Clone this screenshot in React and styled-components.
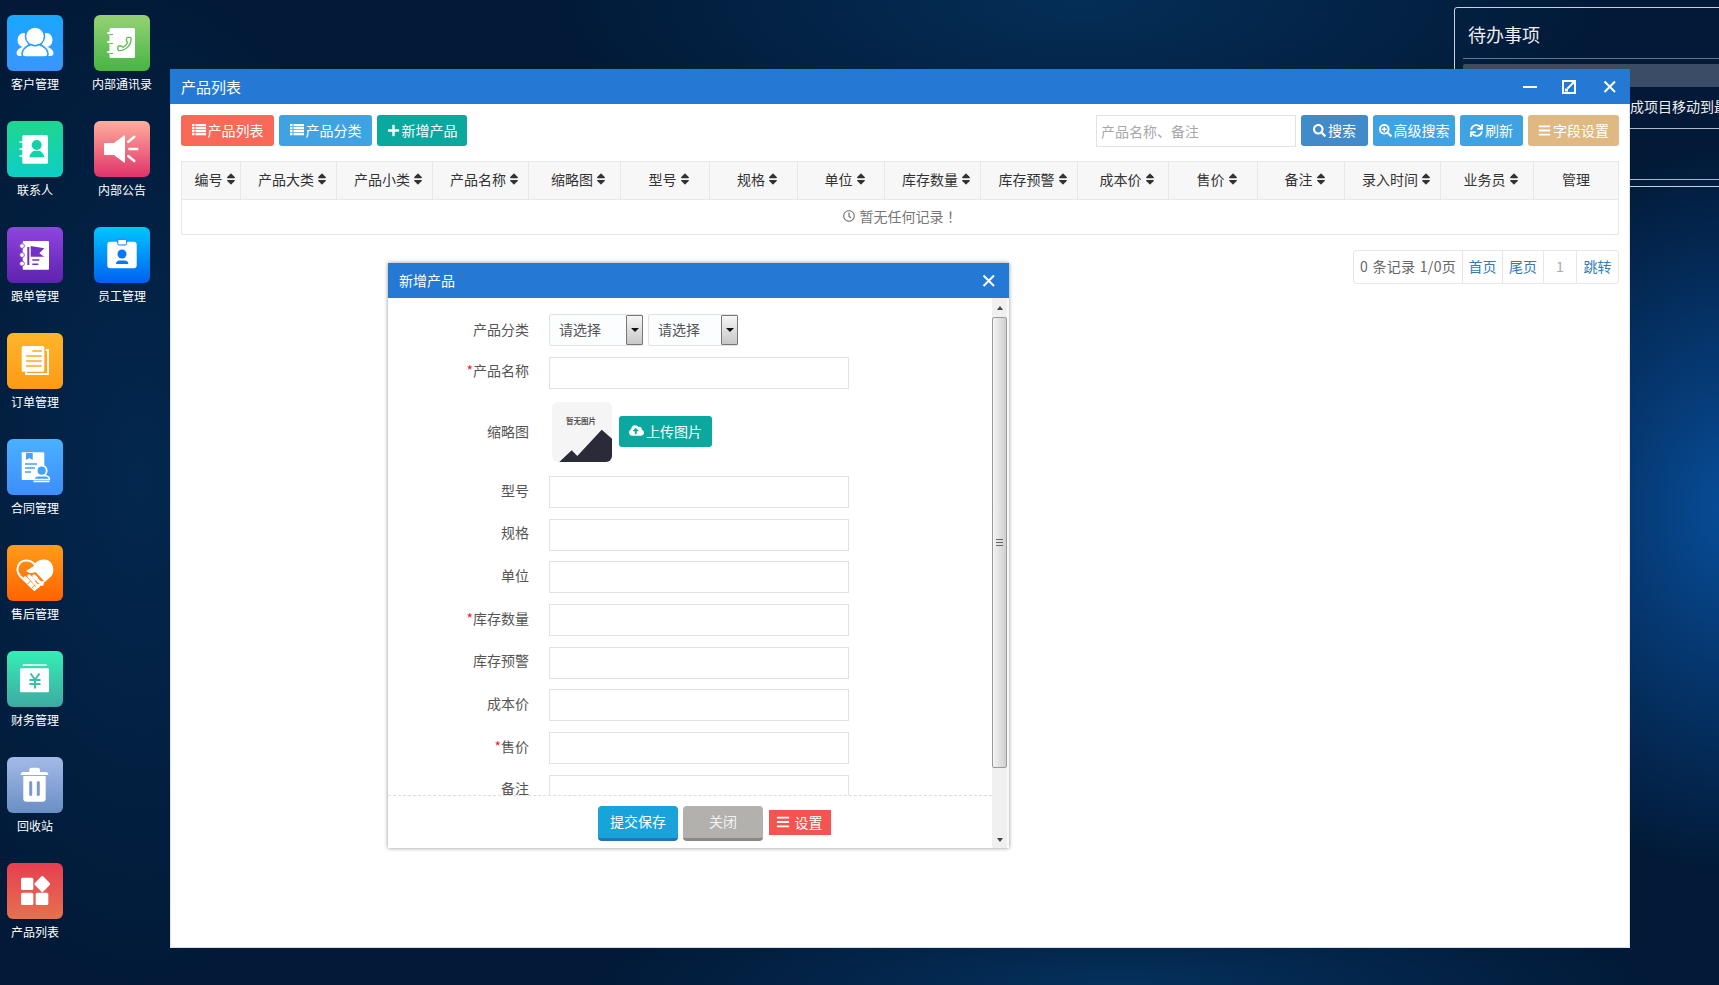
import React from 'react';
import styled, { createGlobalStyle } from 'styled-components';
import { FaPlus, FaSearch, FaSearchPlus, FaSync, FaBars, FaSort, FaRegClock, FaCloudUploadAlt } from 'react-icons/fa';
import { Phone } from 'lucide-react';

const Global = createGlobalStyle`
  html, body { margin: 0; padding: 0; height: 100%; overflow: hidden; }
  body { font-family: "Noto Sans CJK SC", "Liberation Sans", sans-serif; font-size: 14px; color: #333; }
  * { box-sizing: border-box; }
`;

const Desktop = styled.div`
  position: relative;
  width: 1719px;
  height: 985px;
  overflow: hidden;
  background:
    radial-gradient(ellipse 260px 360px at 1730px 510px, rgba(8, 80, 158, 0.95), rgba(8, 80, 158, 0)),
    radial-gradient(ellipse 520px 180px at 1080px 0px, rgba(6, 60, 108, 0.6), rgba(6, 60, 108, 0)),
    radial-gradient(ellipse 520px 90px at 1120px 985px, rgba(5, 58, 108, 0.7), rgba(5, 58, 108, 0)),
    radial-gradient(ellipse 240px 500px at 140px 480px, rgba(4, 50, 96, 0.55), rgba(4, 50, 96, 0)),
    #021a38;
`;

const Shortcuts = styled.div`
  display: grid;
  grid-auto-flow: column;
  grid-template-rows: repeat(9, 106px);
  grid-template-columns: repeat(2, 70px);
  column-gap: 17px;
  padding-top: 15px;
`;

const Shortcut = styled.div`
  display: flex;
  flex-direction: column;
  align-items: center;
`;

const Tile = styled.div`
  width: 56px;
  height: 56px;
  border-radius: 6px;
  background: linear-gradient(180deg, ${p => p.$from}, ${p => p.$to});
  svg { display: block; }
`;

const ShortcutLabel = styled.div`
  margin-top: 4px;
  font-size: 12px;
  line-height: 18px;
  color: #fff;
  white-space: nowrap;
`;

const TodoPanel = styled.div`
  position: absolute;
  left: 1454px;
  top: 7px;
  width: 420px;
  height: 180px;
  border: 1px solid rgba(235, 240, 245, 0.85);
  border-radius: 3px 0 0 0;
  padding-left: 8px;
  color: #eee;
`;

const TodoTitle = styled.div`
  height: 51px;
  padding-left: 5px;
  font-size: 18px;
  line-height: 53px;
  border-bottom: 1px solid rgba(200, 210, 220, 0.5);
`;

const TodoBar = styled.div`
  height: 23px;
  margin-top: 5px;
  background: #3b4c66;
  border-radius: 2px;
`;

const TodoRow = styled.div`
  height: ${p => p.$h}px;
  padding-left: 153px;
  font-size: 14px;
  line-height: 38px;
  white-space: nowrap;
  border-bottom: 1px solid rgba(215, 222, 230, 0.8);
`;

const AppWindow = styled.div`
  position: absolute;
  left: 170px;
  top: 69px;
  width: 1460px;
  height: 879px;
  display: flex;
  flex-direction: column;
`;

const WindowBar = styled.div`
  height: 35px;
  flex: none;
  display: flex;
  align-items: center;
  justify-content: space-between;
  padding: 0 14px 0 11px;
  background: #2379d3;
  color: #fff;
  font-size: 15px;
`;

const WindowControls = styled.div`
  display: flex;
  align-items: center;
  gap: 25px;
  svg { display: block; }
`;

const WindowBody = styled.div`
  position: relative;
  flex: 1;
  background: #fff;
  border-bottom: 1px solid #ddd;
  border-left: 1px solid #e4e4e4;
  border-right: 1px solid #e4e4e4;
  padding: 11px 10px 0 10px;
`;

const Toolbar = styled.div`
  display: flex;
  justify-content: space-between;
  align-items: flex-start;
`;

const ToolGroup = styled.div`
  display: flex;
  gap: 5px;
`;

const ToolButton = styled.div`
  width: ${p => p.$w}px;
  height: 31px;
  padding-bottom: 1px;
  display: flex;
  align-items: center;
  justify-content: center;
  gap: 2px;
  border-radius: 3px;
  background: ${p => p.$bg};
  color: #fff;
  font-size: 14px;
  line-height: 18px;
  white-space: nowrap;
  svg { font-size: 13px; flex: none; }
`;

const SearchBox = styled.div`
  width: 200px;
  height: 32px;
  padding-left: 4px;
  border: 1px solid #e2e2e2;
  color: #a8a8a8;
  font-size: 14px;
  line-height: 30px;
`;

const DataTable = styled.table`
  width: 1437px;
  margin-top: 14px;
  table-layout: fixed;
  border-collapse: collapse;
`;

const HeadCell = styled.th`
  height: 38px;
  padding: 0 0 3px;
  border: 1px solid #e8e8e8;
  background: #f7f7f7;
  font-size: 14px;
  font-weight: 400;
  color: #333;
`;

const HeadInner = styled.span`
  display: inline-flex;
  align-items: center;
  gap: 1px;
  svg { font-size: 14px; color: #333; margin-right: -10px; }
`;

const EmptyCell = styled.td`
  height: 35px;
  padding: 0 0 2px;
  border: 1px solid #e8e8e8;
  text-align: center;
  color: #777;
  font-size: 14px;
`;

const EmptyInner = styled.span`
  display: inline-flex;
  align-items: center;
  gap: 5px;
  svg { font-size: 12px; }
`;

const WidePunct = styled.span`
  font-family: "Noto Sans CJK TC", sans-serif;
`;

const PagerWrap = styled.div`
  display: flex;
  justify-content: flex-end;
  margin-top: 15px;
`;

const Pager = styled.div`
  display: flex;
  height: 34px;
  border: 1px solid #ece5e8;
  border-radius: 3px;
`;

const PagerCell = styled.div`
  width: ${p => p.$w}px;
  padding-bottom: 2px;
  display: flex;
  align-items: center;
  justify-content: center;
  border-left: ${p => (p.$first ? 'none' : '1px solid #ece5e8')};
  color: ${p => p.$color};
  font-size: 14px;
  letter-spacing: ${p => (p.$first ? '0.3px' : '0')};
  word-spacing: ${p => (p.$first ? '1px' : '0')};
  white-space: nowrap;
`;

const Dialog = styled.div`
  position: absolute;
  left: 217px;
  top: 159px;
  width: 621px;
  height: 585px;
  display: flex;
  flex-direction: column;
  background: #fff;
  box-shadow: 0 0 4px rgba(0, 0, 0, 0.45);
`;

const DialogBar = styled.div`
  height: 35px;
  flex: none;
  display: flex;
  align-items: center;
  justify-content: space-between;
  padding: 0 14px 1px 11px;
  background: #2379d3;
  color: #fff;
  font-size: 14px;
  svg { display: block; }
`;

const DialogMain = styled.div`
  flex: 1;
  min-height: 0;
  display: flex;
`;

const DialogColumn = styled.div`
  width: 604px;
  display: flex;
  flex-direction: column;
`;

const FormArea = styled.div`
  height: 497px;
  flex: none;
  overflow: hidden;
  padding-top: 16px;
`;

const FormRow = styled.div`
  display: flex;
  align-items: center;
  min-height: 32px;
  margin-bottom: 11px;
`;

const FieldRow = styled(FormRow)`
  margin-bottom: 10.7px;
`;

const FormLabel = styled.div`
  width: 141px;
  margin-right: 20px;
  padding-bottom: ${p => p.$lift}px;
  text-align: right;
  font-size: 14px;
  line-height: 20px;
  color: #555;
`;

const Star = styled.span`
  color: #f5222d;
`;

const TextField = styled.div`
  width: 300px;
  height: 32px;
  border: 1px solid #e2e2e2;
  background: #fff;
`;

const SelectBox = styled.div`
  width: ${p => p.$w}px;
  height: 32px;
  margin-right: 5px;
  display: flex;
  justify-content: space-between;
  border: 1px solid #e2e2e2;
  border-radius: 2px;
  background: #fbfdff;
  padding-left: 9px;
  font-size: 14px;
  line-height: 29px;
  color: #555;
`;

const SelectArrow = styled.div`
  width: 17px;
  margin-right: -1px;
  display: flex;
  align-items: center;
  justify-content: center;
  border: 1px solid #777;
  border-radius: 1px;
  background: linear-gradient(180deg, #f6f6f6, #c8c8c8);
  &::after {
    content: '';
    border-left: 4px solid transparent;
    border-right: 4px solid transparent;
    border-top: 4px solid #111;
  }
`;

const ThumbRow = styled.div`
  height: 65px;
  margin-bottom: 11px;
  display: flex;
  align-items: center;
`;

const Thumb = styled.div`
  position: relative;
  width: 60px;
  height: 60px;
  margin: -1px 0 0 3px;
  border-radius: 6px;
  overflow: hidden;
  background: #f5f5f5;
  text-align: center;
  font-size: 7.5px;
  font-weight: 700;
  line-height: 12px;
  color: #555;
  padding: 13px 2px 0 0;
  svg { position: absolute; left: 0; bottom: 0; display: block; }
`;

const UploadButton = styled.div`
  width: 93px;
  height: 31px;
  margin: -3px 0 0 7px;
  padding-bottom: 1px;
  display: flex;
  align-items: center;
  justify-content: center;
  gap: 2px;
  border-radius: 3px;
  background: #0aa89e;
  color: #fff;
  font-size: 14px;
  svg { font-size: 15px; }
`;

const DialogFooter = styled.div`
  flex: 1;
  border-top: 1px dashed #ddd;
  padding: 10px 0 0 210px;
  display: flex;
  align-items: flex-start;
  gap: 5px;
`;

const SolidButton = styled.div`
  width: 80px;
  height: 35px;
  border-radius: 4px;
  border-bottom: 3px solid ${p => p.$edge};
  background: ${p => p.$bg};
  color: ${p => p.$fg};
  font-size: 14px;
  line-height: 30px;
  text-align: center;
`;

const FlatButton = styled.div`
  width: 62px;
  height: 25px;
  margin: 4px 0 0 1px;
  padding: 0 2px 2px 0;
  display: flex;
  align-items: center;
  justify-content: center;
  gap: 5px;
  background: #f25550;
  color: #fff;
  font-size: 14px;
  svg { font-size: 14px; }
`;

const ScrollTrack = styled.div`
  width: 17px;
  display: flex;
  flex-direction: column;
  align-items: flex-start;
  background: linear-gradient(90deg, #f0f0f0 0, #f0f0f0 15px, #fafafa 15px);
`;

const ScrollCap = styled.div`
  width: 15px;
  height: ${p => p.$h}px;
  display: flex;
  justify-content: center;
  align-items: ${p => (p.$down ? 'flex-end' : 'center')};
  padding-bottom: ${p => (p.$down ? '6px' : '0')};
  &::after {
    content: '';
    border-left: 3.5px solid transparent;
    border-right: 3.5px solid transparent;
    ${p => (p.$down ? 'border-top: 4px solid #444;' : 'border-bottom: 4px solid #444;')}
  }
`;

const ScrollThumb = styled.div`
  width: 15px;
  height: 451px;
  flex: none;
  display: flex;
  align-items: center;
  justify-content: center;
  border: 1px solid #9a9a9a;
  border-radius: 2px;
  background: linear-gradient(90deg, #f4f4f4, #cfcfcf);
  &::after {
    content: '';
    width: 7px;
    height: 7px;
    background: repeating-linear-gradient(180deg, #666 0 1px, transparent 1px 3px);
  }
`;

const ScrollGap = styled.div`
  flex: 1;
`;

const ink = '#fff';

const Icons = {
  customers: c => (
    <>
      <ellipse cx="16.5" cy="25" rx="6" ry="7" fill={ink} />
      <ellipse cx="39.5" cy="25" rx="6" ry="7" fill={ink} />
      <path d="M10 40c-1.500-3.500 1-7 7-8.500h22c6 1.500 8.500 5 7 8.500-1 1-3 1-5 1H15c-2 0-4 0-5-1z" fill={ink} />
      <circle cx="28" cy="21.500" r="9.500" fill={ink} stroke={c} strokeWidth="1.500" />
      <path d="M15 39c0-5 5-8 9-9.500 2.500 1.500 5.500 1.500 8 0 4 1.500 9 4.500 9 9.500 0 2.500-2 3-4 3H19c-2 0-4-.5-4-3z" fill={ink} stroke={c} strokeWidth="1.500" />
    </>
  ),
  phonebook: c => (
    <>
      <rect x="15.500" y="13" width="25.500" height="30" rx="1.500" fill={ink} />
      {[18, 27, 37].map(y => (
        <path key={y} d={`M14 ${y}h6`} stroke={ink} strokeWidth="2" strokeLinecap="round" />
      ))}
      {[18, 27, 37].map(y => (
        <path key={y} d={`M16 ${y + 1.5}h3`} stroke={c} strokeWidth="1" />
      ))}
      <g transform="translate(38.500 21) scale(-1 1)">
        <Phone x="0" y="0" width="16" height="16" color={c} strokeWidth="2" />
      </g>
    </>
  ),
  contacts: c => (
    <>
      <rect x="15.300" y="14" width="25.700" height="28.700" rx="1.500" fill={ink} />
      {[21, 28, 35].map(y => (
        <path key={y} d={`M13 ${y}h5`} stroke={ink} strokeWidth="1.500" strokeLinecap="round" />
      ))}
      <circle cx="29.700" cy="24" r="5" fill={c} />
      <path d="M22.300 36.300c.5-3.500 3-6 5-6.500h5c2 .5 4.500 3 5 6.500z" fill={c} />
    </>
  ),
  notice: () => (
    <>
      <path d="M11 22h9l10-7.500c.6-.5 1-.2 1 .5v26c0 .7-.4 1-1 .5L20 34h-9c-.6 0-1-.4-1-1V23c0-.6.4-1 1-1z" fill={ink} />
      <path d="M34.300 20.700l6-5M35.300 28h8M34.300 35l6 5" stroke={ink} strokeWidth="2.500" strokeLinecap="round" />
    </>
  ),
  followup: c => (
    <>
      <rect x="15.700" y="14" width="26.300" height="28.700" rx="1" fill={ink} />
      {[19, 28, 36.7].map(y => (
        <circle key={y} cx="15" cy={y} r="2.400" fill={ink} stroke={c} strokeWidth="0.800" />
      ))}
      <path d="M21.300 20v18" stroke={c} strokeWidth="2" />
      <path d="M23.700 19l13.600 2.300-5 5 5 3.400H23.700z" fill={c} />
      <path d="M25.300 33h7M25.300 37.300h6" stroke={c} strokeWidth="1.500" />
    </>
  ),
  staff: c => (
    <>
      <rect x="13.300" y="14.700" width="29.400" height="26.600" rx="3" fill={ink} />
      <rect x="23.700" y="12.300" width="9" height="5.700" rx="1.500" fill={ink} stroke={c} strokeWidth="1" />
      <circle cx="28" cy="27" r="4.500" fill={c} />
      <path d="M22 37c0-2 1.500-3.500 3.500-3.500h5.300c2 0 3.500 1.500 3.500 3.500z" fill={c} />
    </>
  ),
  orders: c => (
    <>
      <path d="M38.700 17h2.300v24H19v-2" fill="none" stroke={ink} strokeWidth="1.800" />
      <rect x="14.700" y="13" width="22.600" height="25.700" rx="1.500" fill={ink} />
      <path d="M25.300 18h9.400M19 23h15.700M19 28h15.700M19 33h15.700" stroke={c} strokeWidth="1.500" />
    </>
  ),
  contract: c => (
    <>
      <rect x="14.700" y="13.300" width="22.600" height="27.700" rx="1" fill={ink} />
      <path d="M19 14h6.700v7l-3.300-2-3.400 2z" fill={c} />
      <path d="M18 25h12M18 29h10M18 33h6" stroke={c} strokeWidth="1.500" />
      <circle cx="34.700" cy="31.700" r="5" fill={c} stroke={ink} strokeWidth="1.800" />
      <path d="M27 40.500c0-2.500 1.500-3.500 4-3.800h7.500c2.500.3 4 1.300 4 3.800z" fill={c} stroke={ink} strokeWidth="1.500" />
      <path d="M26.500 42.500h16" stroke={ink} strokeWidth="1.500" />
    </>
  ),
  service: c => (
    <>
      <path d="M27.500 45L13 31c-5-6-2-15.500 6-15.500 4 0 7 1.500 9 4.500 2-3 5-4.500 9-4.500 7.500 0 10.500 9 6.500 15z" fill="none" stroke={ink} strokeWidth="2" />
      <path d="M19 26l10-6.500c2-3 5-4 8-4 7.500 0 10.500 9 6.500 15l-6 6-9-9.500c-3 1.500-6 1.500-9.500-1z" fill={ink} />
      <path d="M18 33l9.500 10M22 31l9 10M27 31l8 8" stroke={ink} strokeWidth="3.500" strokeLinecap="round" />
      <path d="M20.500 39l3-3M25 43l3-3M31 39l-3-3M34 36l-3-3" stroke={c} strokeWidth="0.900" />
    </>
  ),
  finance: c => (
    <>
      <path d="M15.700 14h24" stroke={ink} strokeWidth="1.500" />
      <rect x="13" y="17.300" width="29" height="24" rx="1" fill={ink} />
      <path d="M23.500 22.500l4.500 6 4.500-6M22.500 29h11M22.500 33h11M28 28.500v9" fill="none" stroke={c} strokeWidth="2" />
    </>
  ),
  trash: c => (
    <>
      <path d="M22.300 13c0-1.500 1-2.300 2.200-2.300h6.300c1.200 0 2.200.8 2.200 2.300v2h5.800c1.500 0 2.500 1 2.500 3H13.700c0-2 1-3 2.500-3h6.100z" fill={ink} />
      <path d="M16.300 19h22.400v22.700c0 2-1.200 3-3 3H19.300c-1.800 0-3-1-3-3z" fill={ink} />
      <rect x="22.200" y="24" width="3" height="15" rx="1.500" fill={c} />
      <rect x="29.800" y="24" width="3" height="15" rx="1.500" fill={c} />
    </>
  ),
  products: () => (
    <>
      <rect x="14" y="14.700" width="12.300" height="12.300" rx="1.500" fill={ink} />
      <rect x="14" y="29.700" width="12.300" height="12.300" rx="1.500" fill={ink} />
      <rect x="28.700" y="29.700" width="12.600" height="12.300" rx="1.500" fill={ink} />
      <rect x="29.300" y="15" width="12" height="12" rx="1.500" fill={ink} transform="rotate(45 35.300 21)" />
    </>
  ),
};

const shortcuts = [
  ['客户管理', '#18a8ff', '#3a95fd', 'customers', '#2a9efe'],
  ['联系人', '#1fd68f', '#0ccfc6', 'contacts', '#12d2a8'],
  ['跟单管理', '#8f45e0', '#5e22ad', 'followup', '#7431c6'],
  ['订单管理', '#ffb52b', '#ff9a14', 'orders', '#ffa820'],
  ['合同管理', '#4ab1ff', '#3d8efc', 'contract', '#42a0fe'],
  ['售后管理', '#ff9c18', '#ff6300', 'service', '#ff8010'],
  ['财务管理', '#35eeb5', '#3daaa2', 'finance', '#3bbfa5'],
  ['回收站', '#a3bae8', '#6a8ec4', 'trash', '#7a9acb'],
  ['产品列表', '#e83e50', '#e4724f', 'products', '#e65050'],
  ['内部通讯录', '#95d274', '#47b544', 'phonebook', '#5cbc50'],
  ['内部公告', '#ffae9c', '#e0336a', 'notice', '#f07080'],
  ['员工管理', '#00c6ff', '#0061ee', 'staff', '#0a78f0'],
];

const columns = [
  ['编号', 59], ['产品大类', 96], ['产品小类', 96], ['产品名称', 96], ['缩略图', 92], ['型号', 89],
  ['规格', 88], ['单位', 87], ['库存数量', 96], ['库存预警', 97], ['成本价', 91], ['售价', 89],
  ['备注', 87], ['录入时间', 96], ['业务员', 93], ['管理', 85],
];

const fields = [
  ['型号'], ['规格'], ['单位'], ['库存数量', true], ['库存预警'], ['成本价'], ['售价', true], ['备注'],
];

const Close = ({ size = 15 }) => (
  <svg width={size} height={size} viewBox="0 0 15 15">
    <path d="M3.500 2.500l10.500 10.500M14 2.500L3.500 13" stroke="#fff" strokeWidth="2" />
  </svg>
);

const ListGlyph = () => (
  <svg width="14" height="12" viewBox="0 0 14 12">
    {[0, 3, 6, 9].map(y => (
      <g key={y} fill="#fff">
        <rect x="0" y={y} width="2.500" height="2.300" />
        <rect x="3.500" y={y} width="10.500" height="2.300" />
      </g>
    ))}
  </svg>
);

export default function App() {
  return (
    <Desktop>
      <Global />
      <Shortcuts>
        {shortcuts.map(([name, from, to, icon, tint]) => (
          <Shortcut key={name}>
            <Tile $from={from} $to={to}>
              <svg width="56" height="56" viewBox="0 0 56 56">{Icons[icon](tint)}</svg>
            </Tile>
            <ShortcutLabel>{name}</ShortcutLabel>
          </Shortcut>
        ))}
      </Shortcuts>

      <TodoPanel>
        <TodoTitle>待办事项</TodoTitle>
        <TodoBar />
        <TodoRow $h={42}>完成项目移动到最后</TodoRow>
        <TodoRow $h={51} />
      </TodoPanel>

      <AppWindow>
        <WindowBar>
          <span>产品列表</span>
          <WindowControls>
            <svg width="14" height="14" viewBox="0 0 14 14"><path d="M0 7h14" stroke="#fff" strokeWidth="2" /></svg>
            <svg width="14" height="14" viewBox="0 0 14 14">
              <rect x="1" y="1" width="12" height="12" fill="none" stroke="#fff" strokeWidth="2" />
              <path d="M5.500 8.500L12 2" stroke="#fff" strokeWidth="2" />
              <rect x="3" y="8.500" width="3" height="3" fill="#fff" />
            </svg>
            <Close />
          </WindowControls>
        </WindowBar>
        <WindowBody>
          <Toolbar>
            <ToolGroup>
              <ToolButton $w={93} $bg="#f96858"><ListGlyph />产品列表</ToolButton>
              <ToolButton $w={93} $bg="#3fa2e3"><ListGlyph />产品分类</ToolButton>
              <ToolButton $w={90} $bg="#0aa89e"><FaPlus />新增产品</ToolButton>
            </ToolGroup>
            <ToolGroup>
              <SearchBox>产品名称、备注</SearchBox>
              <ToolButton $w={67} $bg="#428bca"><FaSearch />搜索</ToolButton>
              <ToolButton $w={82} $bg="#3fa2e3"><FaSearchPlus />高级搜索</ToolButton>
              <ToolButton $w={63} $bg="#3fa2e3"><FaSync />刷新</ToolButton>
              <ToolButton $w={91} $bg="#e0b982"><FaBars />字段设置</ToolButton>
            </ToolGroup>
          </Toolbar>

          <DataTable>
            <colgroup>
              {columns.map(([name, w]) => <col key={name} width={w} />)}
            </colgroup>
            <thead>
              <tr>
                {columns.map(([name]) => (
                  <HeadCell key={name}>
                    <HeadInner>{name}{name !== '管理' && <FaSort />}</HeadInner>
                  </HeadCell>
                ))}
              </tr>
            </thead>
            <tbody>
              <tr>
                <EmptyCell colSpan={columns.length}>
                  <EmptyInner><FaRegClock /><span>暂无任何记录<WidePunct>！</WidePunct></span></EmptyInner>
                </EmptyCell>
              </tr>
            </tbody>
          </DataTable>

          <PagerWrap>
            <Pager>
              <PagerCell $first $w={108} $color="#666">0 条记录 1/0页</PagerCell>
              <PagerCell $w={40} $color="#337ab7">首页</PagerCell>
              <PagerCell $w={41} $color="#337ab7">尾页</PagerCell>
              <PagerCell $w={33} $color="#aaa">1</PagerCell>
              <PagerCell $w={42} $color="#337ab7">跳转</PagerCell>
            </Pager>
          </PagerWrap>

          <Dialog>
            <DialogBar>
              <span>新增产品</span>
              <Close />
            </DialogBar>
            <DialogMain>
              <DialogColumn>
                <FormArea>
                  <FormRow>
                    <FormLabel $lift={3}>产品分类</FormLabel>
                    <SelectBox $w={94}>请选择<SelectArrow /></SelectBox>
                    <SelectBox $w={90}>请选择<SelectArrow /></SelectBox>
                  </FormRow>
                  <FormRow>
                    <FormLabel $lift={6}><Star>*</Star>产品名称</FormLabel>
                    <TextField />
                  </FormRow>
                  <ThumbRow>
                    <FormLabel $lift={4}>缩略图</FormLabel>
                    <Thumb>
                      暂无图片
                      <svg width="60" height="60" viewBox="0 0 60 60">
                        <path d="M7.300 60L19.700 48.300 25.300 54 49.700 27.700 60 36.700V60z" fill="#2a2a38" />
                      </svg>
                    </Thumb>
                    <UploadButton><FaCloudUploadAlt />上传图片</UploadButton>
                  </ThumbRow>
                  {fields.map(([name, req]) => (
                    <FieldRow key={name}>
                      <FormLabel $lift={5}>{req && <Star>*</Star>}{name}</FormLabel>
                      <TextField />
                    </FieldRow>
                  ))}
                </FormArea>
                <DialogFooter>
                  <SolidButton $bg="#18a3da" $edge="#2574b8" $fg="#fff">提交保存</SolidButton>
                  <SolidButton $bg="#b3b1ae" $edge="#8a8a8a" $fg="#f2f2f2">关闭</SolidButton>
                  <FlatButton><FaBars />设置</FlatButton>
                </DialogFooter>
              </DialogColumn>
              <ScrollTrack>
                <ScrollCap $h={19} />
                <ScrollThumb />
                <ScrollGap />
                <ScrollCap $h={19} $down />
              </ScrollTrack>
            </DialogMain>
          </Dialog>
        </WindowBody>
      </AppWindow>
    </Desktop>
  );
}
